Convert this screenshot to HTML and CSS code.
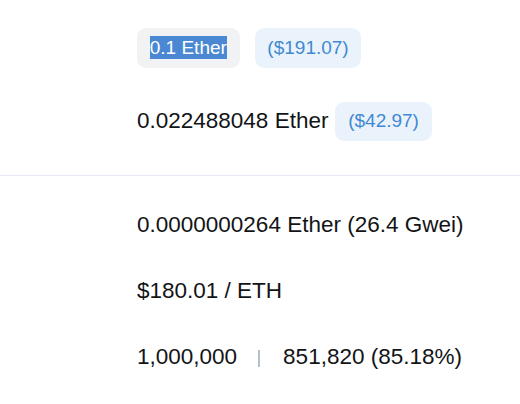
FILE: index.html
```html
<!DOCTYPE html>
<html lang="en">
<head>
<meta charset="utf-8">
<title>Transaction details</title>
<link rel="stylesheet" href="styles.css">
</head>
<body>
<main class="page">
  <section class="group group-value">
    <div class="row row-value">
      <span class="badge badge-muted"><span class="sel">0.1 Ether</span></span>
      <span class="badge badge-info">($191.07)</span>
    </div>
    <div class="row row-fee">
      <span class="amount">0.022488048 Ether</span>
      <span class="badge badge-info">($42.97)</span>
    </div>
  </section>
  <hr class="divider">
  <section class="group group-gas">
    <div class="row"><span>0.0000000264 Ether (26.4 Gwei)</span></div>
    <div class="row"><span>$180.01 / ETH</span></div>
    <div class="row"><span>1,000,000</span><span class="sep" aria-hidden="true"></span><span>851,820 (85.18%)</span></div>
  </section>
</main>
</body>
</html>
```

FILE: styles.css
```css
html, body {
  margin: 0;
  padding: 0;
  background: #ffffff;
}

body {
  font-family: "Liberation Sans", Arial, Helvetica, sans-serif;
  font-size: 22.5px;
  color: #121416;
}

.group {
  display: flex;
  flex-direction: column;
  padding-left: 137px;
}

.group-value {
  padding-top: 28px;
  padding-bottom: 34px;
  gap: 34px;
}

.group-gas {
  padding-top: 32px;
  gap: 32px;
}

.row {
  display: flex;
  align-items: center;
  line-height: 34px;
  white-space: nowrap;
}

.row-value {
  gap: 15px;
}

.row-fee {
  gap: 7px;
}

.badge {
  display: inline-block;
  font-size: 19px;
  line-height: 28.5px;
  padding: 5.5px 12.75px;
  border-radius: 9px;
}

.badge-muted {
  background: #f0f2f4;
  color: #121416;
}

.badge-info {
  background: #eaf3fc;
  color: #4189d0;
}

.sel {
  background: #4a88d4;
  color: #ffffff;
  padding: 1px 0;
}

.divider {
  border: 0;
  margin: 0;
  height: 1px;
  background: #e7eaf3;
}

.sep {
  display: inline-block;
  width: 2px;
  height: 17px;
  background: #b4bfca;
  margin: 2px 23px 0 21px;
}
```
